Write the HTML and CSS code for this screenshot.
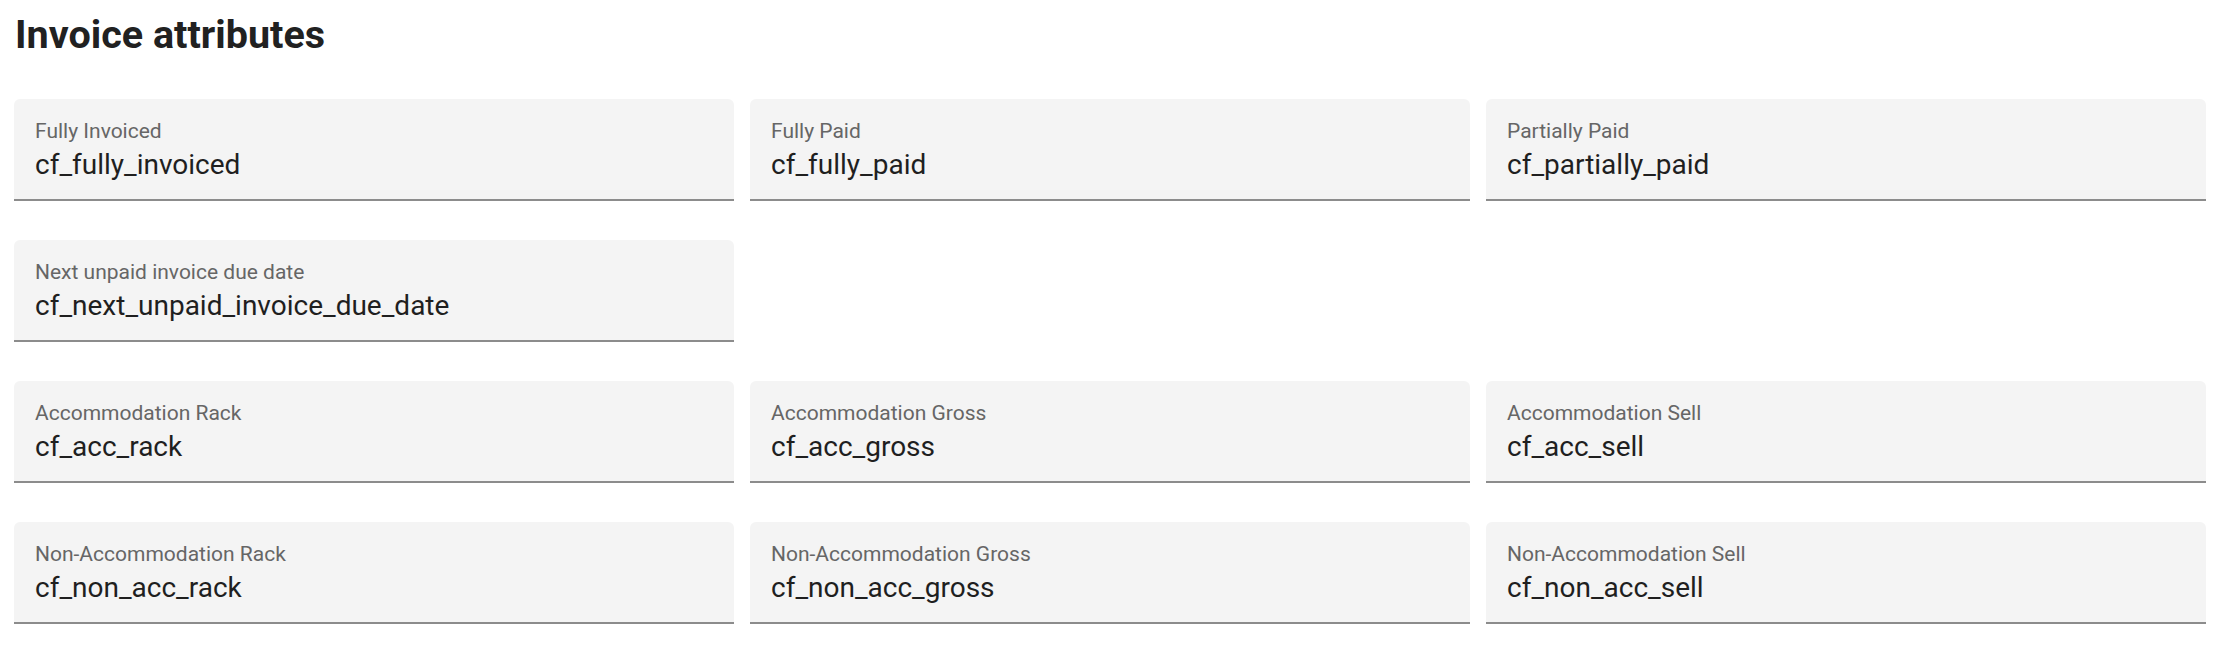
FILE: index.html
```html
<!DOCTYPE html>
<html lang="en">
<head>
<meta charset="utf-8">
<title>Invoice attributes</title>
<link rel="stylesheet" href="styles.css">
</head>
<body>
<main class="page">
  <h1 class="title">Invoice attributes</h1>
  <div class="grid">
    <div class="field"><span class="label">Fully Invoiced</span><span class="value">cf_fully_invoiced</span></div>
    <div class="field"><span class="label">Fully Paid</span><span class="value">cf_fully_paid</span></div>
    <div class="field"><span class="label">Partially Paid</span><span class="value">cf_partially_paid</span></div>

    <div class="field new-row"><span class="label">Next unpaid invoice due date</span><span class="value">cf_next_unpaid_invoice_due_date</span></div>

    <div class="field new-row"><span class="label">Accommodation Rack</span><span class="value">cf_acc_rack</span></div>
    <div class="field"><span class="label">Accommodation Gross</span><span class="value">cf_acc_gross</span></div>
    <div class="field"><span class="label">Accommodation Sell</span><span class="value">cf_acc_sell</span></div>

    <div class="field"><span class="label">Non-Accommodation Rack</span><span class="value">cf_non_acc_rack</span></div>
    <div class="field"><span class="label">Non-Accommodation Gross</span><span class="value">cf_non_acc_gross</span></div>
    <div class="field"><span class="label">Non-Accommodation Sell</span><span class="value">cf_non_acc_sell</span></div>
  </div>
</main>
</body>
</html>
```

FILE: styles.css
```css
html, body {
  margin: 0;
  padding: 0;
  background: #ffffff;
}

body {
  font-family: Roboto, "Liberation Sans", sans-serif;
  color: #212121;
}

.page {
  padding: 11px 10px 0 14px;
}

.title {
  margin: 0 0 40px 1px;
  font-size: 39.5px;
  line-height: 48px;
  font-weight: 700;
  color: #212121;
}

.grid {
  display: grid;
  grid-template-columns: repeat(3, 1fr);
  column-gap: 16px;
  row-gap: 39px;
}

.new-row {
  grid-column-start: 1;
}

.field {
  display: flex;
  flex-direction: column;
  height: 102px;
  box-sizing: border-box;
  padding: 20px 22px 0 21px;
  background: #f4f4f4;
  border-radius: 6px 6px 0 0;
  border-bottom: 2px solid #8c8c8c;
}

.label {
  font-size: 21px;
  line-height: 24px;
  color: #666666;
}

.value {
  margin-top: 6px;
  font-size: 28px;
  line-height: 32px;
  color: #1f1f1f;
}
```
